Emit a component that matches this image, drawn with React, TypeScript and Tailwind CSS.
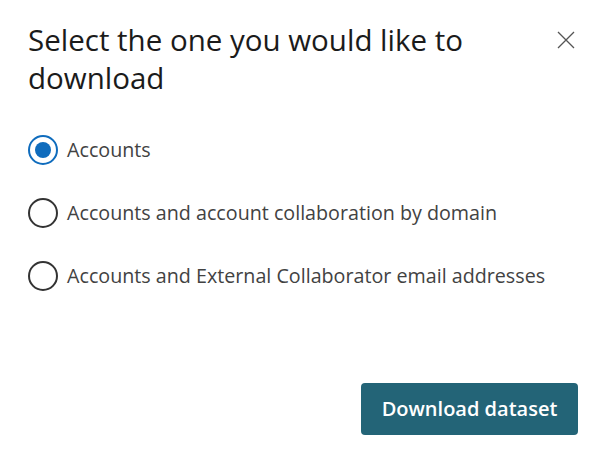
import React, { useState } from "react";

const options = [
  "Accounts",
  "Accounts and account collaboration by domain",
  "Accounts and External Collaborator email addresses",
];

export default function App() {
  const [sel, setSel] = useState(0);
  return (
    <div
      className="w-[607px] h-[465px] bg-white flex flex-col pl-[28px] pr-[29px] pt-[21px] pb-[30px]"
      style={{ fontFamily: '"Open Sans", "Noto Sans", sans-serif' }}
    >
      <div className="flex justify-between items-start">
        <h1 className="text-[29.5px] leading-[38px] font-medium text-[#1b1b1b] w-[480px]">
          Select the one you would like to download
        </h1>
        <button className="mt-[9px] mr-[2px] w-[20px] h-[20px] flex items-center justify-center text-[#555]">
          <svg width="18" height="18" viewBox="0 0 18 18" fill="none" stroke="currentColor" strokeWidth="1.3">
            <path d="M1 1L17 17M17 1L1 17" />
          </svg>
        </button>
      </div>
      <div className="flex flex-col gap-[33px] mt-[38px]">
        {options.map((o, i) => (
          <label key={o} className="flex items-center gap-[9px] cursor-pointer" onClick={() => setSel(i)}>
            <span
              className={
                "w-[30px] h-[30px] rounded-full border-2 flex items-center justify-center shrink-0 " +
                (sel === i ? "border-[#0f6cbd]" : "border-[#333]")
              }
            >
              {sel === i && <span className="w-[16px] h-[16px] rounded-full bg-[#0f6cbd]" />}
            </span>
            <span className="text-[19.7px] leading-[30px] text-[#424242]">{o}</span>
          </label>
        ))}
      </div>
      <div className="mt-auto flex justify-end">
        <button className="w-[217px] h-[52px] rounded-[4px] bg-[#236477] text-white text-[20px] font-semibold">
          Download dataset
        </button>
      </div>
    </div>
  );
}
